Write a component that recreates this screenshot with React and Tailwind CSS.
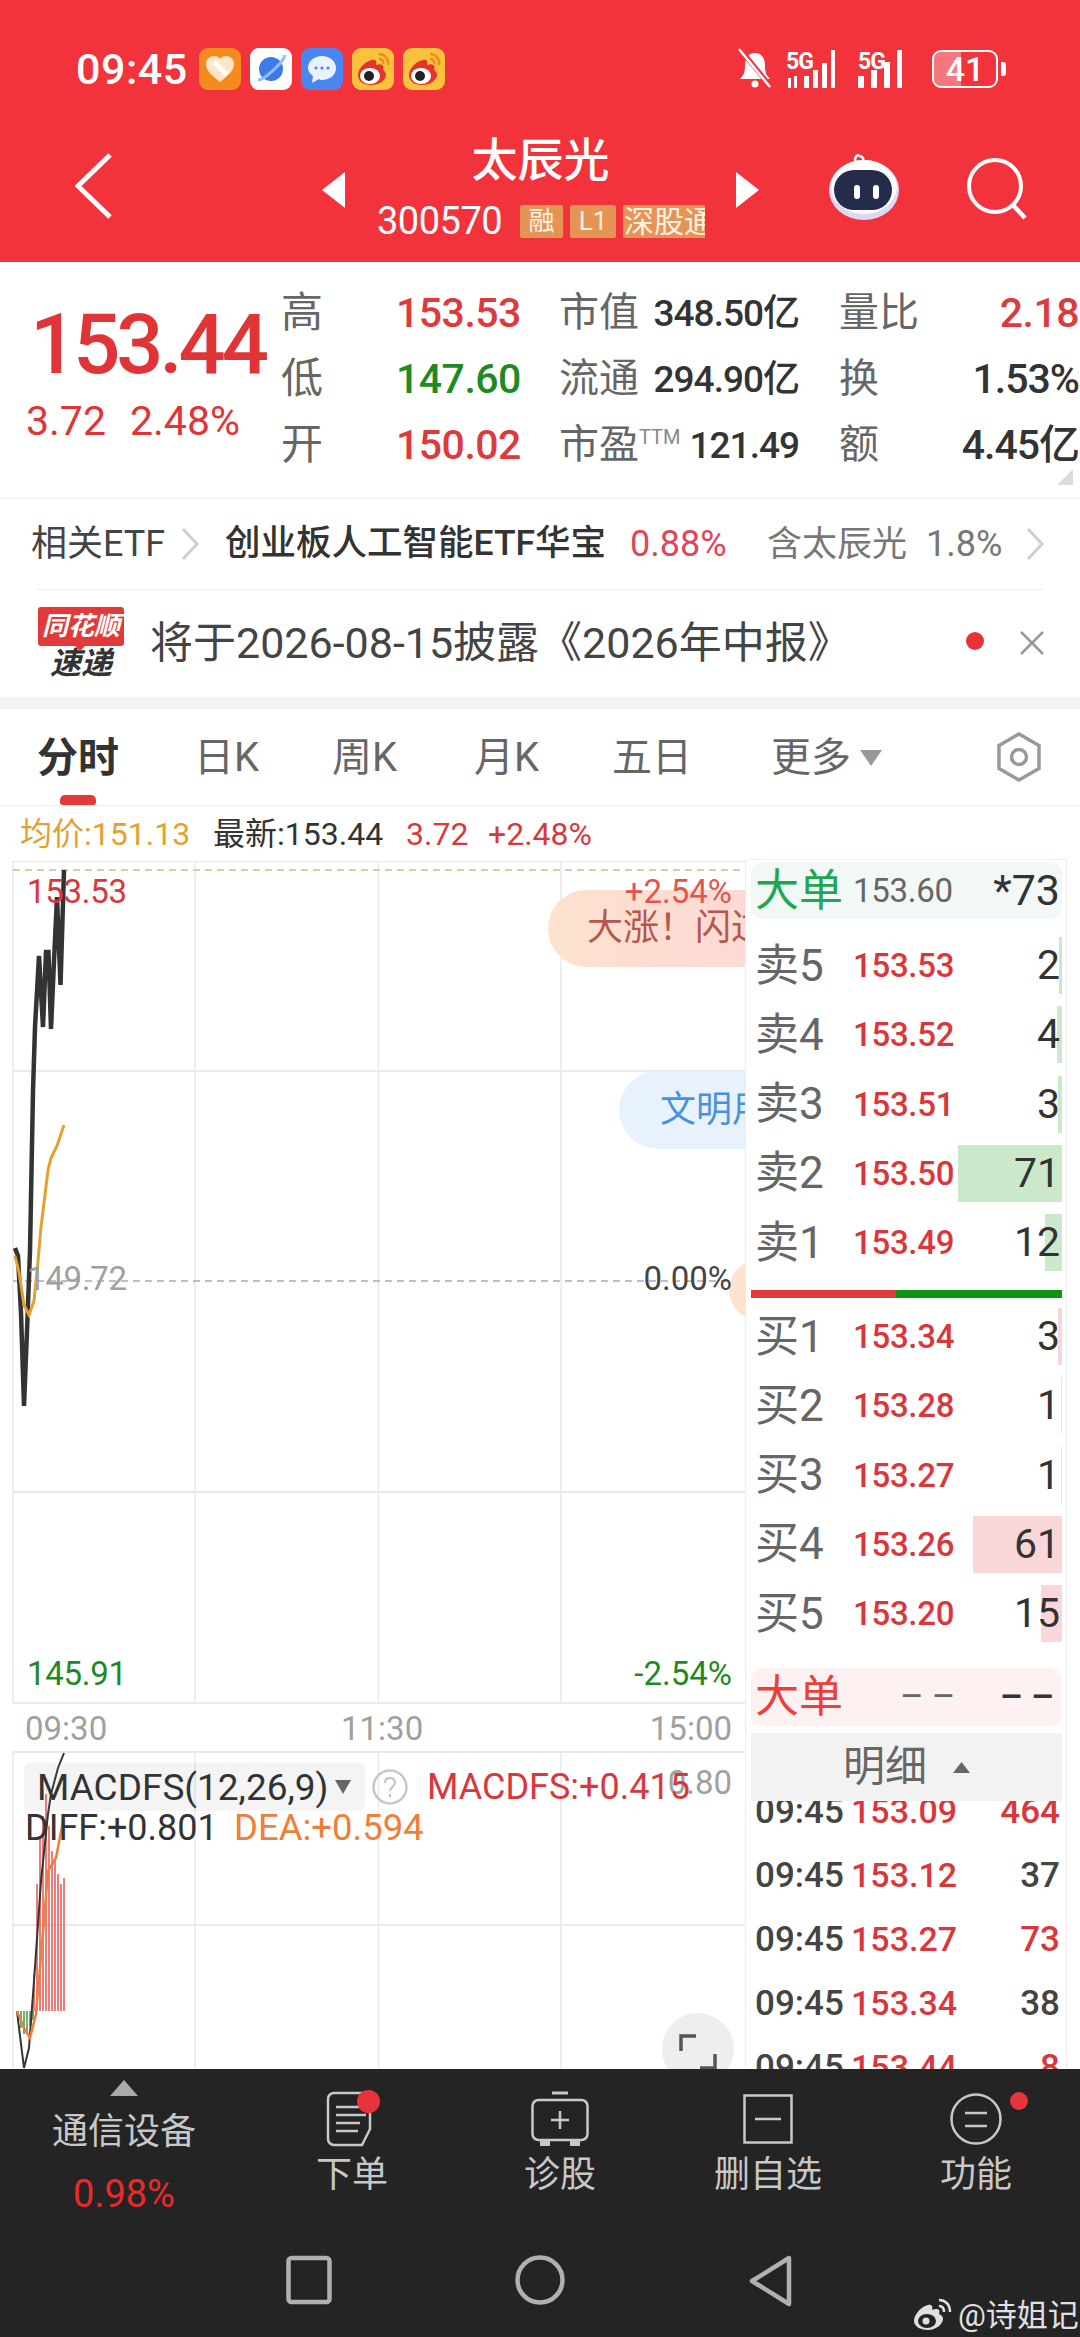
import React from 'react';

const asks = [
  { name: '卖5', price: '153.53', qty: '2', bar: 3 },
  { name: '卖4', price: '153.52', qty: '4', bar: 5 },
  { name: '卖3', price: '153.51', qty: '3', bar: 4 },
  { name: '卖2', price: '153.50', qty: '71', bar: 104 },
  { name: '卖1', price: '153.49', qty: '12', bar: 17 },
];

const bids = [
  { name: '买1', price: '153.34', qty: '3', bar: 4 },
  { name: '买2', price: '153.28', qty: '1', bar: 1, thin: true },
  { name: '买3', price: '153.27', qty: '1', bar: 1, thin: true },
  { name: '买4', price: '153.26', qty: '61', bar: 89 },
  { name: '买5', price: '153.20', qty: '15', bar: 21 },
];

const ticks = [
  { price: '153.09', qty: '464', up: true },
  { price: '153.12', qty: '37' },
  { price: '153.27', qty: '73', up: true },
  { price: '153.34', qty: '38' },
  { price: '153.44', qty: '8', up: true },
];

const macdBars = [
  [34, 1973], [37, 1883], [40, 1837], [43, 1815], [46, 1793], [49, 1825],
  [52, 1850], [55, 1857], [58, 1873], [61, 1883], [64, 1877],
];

const tools = [
  { label: '下单', icon: 'order', dot: 'on' },
  { label: '诊股', icon: 'diag' },
  { label: '删自选', icon: 'minus' },
  { label: '功能', icon: 'menu', dot: 'side' },
];

function Weibo({ size = 42 }) {
  return (
    <svg width={size} height={size} viewBox="0 0 42 42">
      <rect width="42" height="42" rx="9" fill="#f9c23c" />
      <path d="M6 27c0-7 8-14 14-15 4-1 5 2 4 5 5-2 9 0 7 5 2 1 3 3 3 5 0 5-7 10-15 10S6 33 6 27z" fill="#e6342a" />
      <ellipse cx="18" cy="28" rx="10" ry="8" fill="#fff" />
      <circle cx="17" cy="28" r="5" fill="#222" />
      <path d="M27 6c6 0 10 5 9 11M27 11c3 0 5 2 4 5" stroke="#f08a24" strokeWidth="2.4" fill="none" />
    </svg>
  );
}

function AppIcons() {
  return (
    <div className="flex gap-[9px] ml-[14px]">
      <svg width="42" height="42" viewBox="0 0 42 42">
        <rect width="42" height="42" rx="9" fill="#f58a1f" />
        <path d="M21 34C12 27 7 22 7 16c0-5 4-8 8-8 3 0 5 1 6 3 1-2 3-3 6-3 4 0 8 3 8 8 0 6-5 11-14 18z" fill="#fde6c8" />
        <path d="M15 14l13 13" stroke="#fff" strokeWidth="5" />
      </svg>
      <svg width="42" height="42" viewBox="0 0 42 42">
        <rect width="42" height="42" rx="9" fill="#fff" />
        <circle cx="21" cy="21" r="12" fill="#3c7be8" />
        <path d="M8 32C14 32 34 14 35 7" stroke="#8fc0f5" strokeWidth="3" fill="none" />
      </svg>
      <svg width="42" height="42" viewBox="0 0 42 42">
        <rect width="42" height="42" rx="9" fill="#4a86f0" />
        <path d="M21 8c8 0 14 5 14 12s-6 12-14 12c-1 0-2 0-3-1l-7 4 1-7c-3-2-5-5-5-8 0-7 6-12 14-12z" fill="#e9f2fe" />
        <circle cx="15" cy="20" r="1.6" fill="#4a86f0" />
        <circle cx="21" cy="20" r="1.6" fill="#4a86f0" />
        <circle cx="27" cy="20" r="1.6" fill="#4a86f0" />
      </svg>
      <Weibo />
      <Weibo />
    </div>
  );
}

function StatusRight() {
  return (
    <div className="flex items-center ml-auto mr-[74px] text-white">
      <svg width="36" height="42" viewBox="0 0 36 42" className="mr-[13px]">
        <path d="M18 5c-7 0-10 6-10 12 0 7-1 10-5 14h30c-4-4-5-7-5-14 0-6-3-12-10-12z" fill="#fff" />
        <circle cx="18" cy="36" r="3.500" fill="#fff" />
        <path d="M3 1l31 38" stroke="#f2333b" strokeWidth="5" />
        <path d="M2 1l31 38" stroke="#fff" strokeWidth="2.500" />
      </svg>
      <div className="relative w-[60px] h-[38px] mr-[12px]">
        <span className="absolute left-0 top-0 text-[23px] leading-none font-bold tracking-[-1px]">5G</span>
        <svg width="60" height="38" viewBox="0 0 60 38">
          <rect x="18" y="26" width="5" height="12" fill="#fff" />
          <rect x="27" y="20" width="5" height="18" fill="#fff" />
          <rect x="36" y="13" width="5" height="25" fill="#fff" />
          <rect x="45" y="0" width="4" height="38" fill="#fff" />
          <rect x="2" y="28" width="3" height="10" fill="#fff" />
          <rect x="8" y="26" width="3" height="12" fill="#fff" />
        </svg>
      </div>
      <div className="relative w-[56px] h-[38px] mr-[18px]">
        <span className="absolute left-0 top-0 text-[23px] leading-none font-bold tracking-[-1px]">5G</span>
        <svg width="56" height="38" viewBox="0 0 56 38">
          <rect x="0" y="26" width="6" height="12" fill="#fff" />
          <rect x="13" y="20" width="6" height="18" fill="#fff" />
          <rect x="26" y="12" width="6" height="26" fill="#fff" />
          <rect x="39" y="0" width="5" height="38" fill="#fff" />
        </svg>
      </div>
      <div className="relative w-[66px] h-[38px] border-[2px] border-white rounded-[9px] flex items-center justify-center overflow-hidden">
        <div className="absolute left-0 top-0 bottom-0 w-[27px] bg-[#ffffff55]" />
        <span className="relative text-[34px] leading-none font-medium">41</span>
      </div>
      <div className="w-[5px] h-[14px] bg-white rounded-r-[3px] ml-[3px]" />
    </div>
  );
}

function Robot() {
  return (
    <svg width="72" height="66" viewBox="0 0 72 66">
      <path d="M28 8c-2-3 0-7 3-7M31 2c3 0 5 2 4 5" stroke="#fff" strokeWidth="2.500" fill="none" />
      <ellipse cx="36" cy="36" rx="35" ry="30" fill="#dcd8f6" />
      <ellipse cx="36" cy="33" rx="33" ry="27" fill="#fff" />
      <rect x="6" y="16" width="58" height="40" rx="20" fill="#252b4a" />
      <rect x="26" y="31" width="6" height="14" rx="3" fill="#fff" />
      <rect x="45" y="31" width="6" height="14" rx="3" fill="#fff" />
    </svg>
  );
}

function Header() {
  return (
    <div className="h-[262px] shrink-0 bg-[#f2333b] text-white flex flex-col">
      <div className="h-[140px] flex items-start pt-[48px] pl-[76px]">
        <span className="w-[109px] text-[43px] leading-[42px] font-medium tracking-[0.5px]">09:45</span>
        <AppIcons />
        <StatusRight />
      </div>
      <div className="h-[122px] flex relative">
        <svg width="38" height="66" viewBox="0 0 38 66" className="ml-[75px] mt-[13px]">
          <path d="M35 2L3 33l32 31" stroke="#fff" strokeWidth="5" fill="none" />
        </svg>
        <svg width="24" height="36" viewBox="0 0 24 36" className="ml-[209px] mt-[32px]">
          <path d="M23 0v36L0 18z" fill="#fff" />
        </svg>
        <div className="w-[389px] h-full flex flex-col items-center">
          <span className="text-[46px] leading-[46px] mt-[-3px] font-medium">太辰光</span>
          <div className="flex items-center mt-[19px] self-start ml-[31px]">
            <span className="text-[38px] leading-[38px] tracking-[-0.5px] w-[143px]">300570</span>
            <span className="w-[43px] h-[33px] bg-[#e59455] text-[#fff3e4] text-[26px] leading-[33px] text-center rounded-[2px]">融</span>
            <span className="w-[46px] h-[33px] ml-[7px] bg-[#e59455] text-[#fff3e4] text-[26px] leading-[33px] text-center rounded-[2px]">L1</span>
            <span className="w-[82px] h-[33px] ml-[7px] bg-[#e59455] text-[#fff3e4] text-[30px] leading-[33px] pl-[1px] overflow-hidden whitespace-nowrap rounded-l-[2px]">深股通</span>
          </div>
        </div>
        <svg width="24" height="36" viewBox="0 0 24 36" className="mt-[32px]">
          <path d="M1 0v36l23-18z" fill="#fff" />
        </svg>
        <div className="ml-[69px] mt-[14px]">
          <Robot />
        </div>
        <svg width="62" height="62" viewBox="0 0 62 62" className="ml-[66px] mt-[18px]">
          <circle cx="29" cy="28" r="26" stroke="#fff" strokeWidth="4" fill="none" />
          <path d="M46 46l13 14" stroke="#fff" strokeWidth="4.500" />
        </svg>
      </div>
    </div>
  );
}

function StatCell({ label, value, valueClass }) {
  return (
    <div className="flex items-center justify-between">
      <span className="text-[40px] leading-none text-[#666]">{label}</span>
      <span className={valueClass}>{value}</span>
    </div>
  );
}

function Stats() {
  const dark = 'text-[37px] leading-none text-[#333] font-medium tracking-[-1px]';
  const big = 'text-[41px] leading-none text-[#333] font-medium tracking-[-1px]';
  const red = 'text-[41px] leading-none font-medium text-[#dc3a3c] tracking-[-0.5px]';
  return (
    <div className="h-[237px] shrink-0 bg-white border-b border-[#eeeeee] flex relative">
      <div className="w-[281px] shrink-0 pl-[26px]">
        <div className="text-[83px] leading-none font-medium text-[#e03436] tracking-[-4px] pl-[4px] mt-[41px]">153.44</div>
        <div className="flex mt-[15px] text-[41px] leading-none text-[#e03436]">
          <span className="w-[104px]">3.72</span>
          <span>2.48%</span>
        </div>
      </div>
      <div className="grid grid-cols-[115px_123px_40px_240px_40px_240px] grid-rows-[66px_66px_66px] pt-[18px] items-center">
        <span className="text-[42px] leading-none text-[#666]">高</span>
        <span className={red}>153.53</span>
        <span />
        <StatCell label="市值" value="348.50亿" valueClass={dark} />
        <span />
        <StatCell label="量比" value="2.18" valueClass={red} />
        <span className="text-[42px] leading-none text-[#666]">低</span>
        <span className="text-[41px] leading-none font-medium text-[#1d8a24] tracking-[-0.5px]">147.60</span>
        <span />
        <StatCell label="流通" value="294.90亿" valueClass={dark} />
        <span />
        <StatCell label="换" value="1.53%" valueClass={big} />
        <span className="text-[42px] leading-none text-[#666]">开</span>
        <span className={red}>150.02</span>
        <span />
        <div className="flex items-center justify-between">
          <span className="text-[40px] leading-none text-[#666]">
            市盈<span className="text-[20px] align-super text-[#888]">TTM</span>
          </span>
          <span className={dark}>121.49</span>
        </div>
        <span />
        <StatCell label="额" value="4.45亿" valueClass={big} />
      </div>
      <svg width="16" height="16" viewBox="0 0 16 16" className="absolute right-[7px] bottom-[13px]">
        <path d="M16 0v16H0z" fill="#dcdcdc" />
      </svg>
    </div>
  );
}

function Chevron({ className }) {
  return (
    <svg width="20" height="34" viewBox="0 0 20 34" className={className}>
      <path d="M3 2l14 15L3 32" stroke="#cfcfcf" strokeWidth="3" fill="none" />
    </svg>
  );
}

function EtfRow() {
  return (
    <div className="h-[90px] shrink-0 bg-white flex items-center pl-[31px] text-[36px] leading-none whitespace-nowrap">
      <span className="text-[#444] w-[149px]">相关ETF</span>
      <Chevron />
      <span className="ml-[25px] w-[405px] text-[#333] font-medium text-[35.500px]">创业板人工智能ETF华宝</span>
      <span className="w-[137px] text-[#e0455c]">0.88%</span>
      <span className="w-[159px] text-[#777] text-[35px]">含太辰光</span>
      <span className="w-[99px] text-[#777]">1.8%</span>
      <Chevron />
    </div>
  );
}

function NewsRow() {
  return (
    <div className="h-[108px] shrink-0 bg-white flex items-center relative">
      <div className="absolute left-[36px] right-[36px] top-0 h-px bg-[#eeeeee]" />
      <div className="ml-[37px] w-[88px] h-[72px] flex flex-col items-center shrink-0">
        <div className="relative w-[86px] h-[39px] bg-[#e23a3a] rounded-[3px] text-white text-[26px] leading-[39px] italic font-bold text-center whitespace-nowrap">
          同花顺
          <div className="absolute left-[36px] top-[38px] w-0 h-0 border-l-[6px] border-r-[6px] border-t-[6px] border-l-transparent border-r-transparent border-t-[#e23a3a]" />
        </div>
        <div className="text-[31px] leading-[30px] mt-[3px] italic font-bold text-[#333] whitespace-nowrap">速递</div>
      </div>
      <span className="ml-[25px] text-[43px] leading-none text-[#444] whitespace-nowrap">将于2026-08-15披露《2026年中报》</span>
      <div className="absolute left-[966px] top-[43px] w-[18px] h-[18px] rounded-full bg-[#e6343a]" />
      <svg width="24" height="24" viewBox="0 0 24 24" className="absolute left-[1020px] top-[42px]">
        <path d="M1 1l22 22M23 1L1 23" stroke="#999" strokeWidth="2.500" />
      </svg>
    </div>
  );
}

function Tabs() {
  return (
    <div className="h-[97px] shrink-0 bg-white border-b border-[#eeeeee] relative flex items-center text-[40px] leading-none text-[#666] pt-[2px] whitespace-nowrap">
      <span className="ml-[37px] w-[157px] font-bold text-[#333] text-[41px]">分时</span>
      <span className="w-[138px]">日K</span>
      <span className="w-[142px]">周K</span>
      <span className="w-[138px]">月K</span>
      <span className="w-[159px]">五日</span>
      <span>更多</span>
      <svg width="22" height="16" viewBox="0 0 22 16" className="ml-[9px]">
        <path d="M0 0h22L11 16z" fill="#999" />
      </svg>
      <svg width="50" height="52" viewBox="0 0 50 52" className="absolute left-[994px] top-[22px]">
        <path d="M25 3l20 11.500v23L25 49 5 37.500v-23z" stroke="#999" strokeWidth="3.500" fill="none" />
        <circle cx="25" cy="26" r="7.500" stroke="#999" strokeWidth="3.500" fill="none" />
      </svg>
      <div className="absolute left-[60px] bottom-0 w-[36px] h-[10px] bg-[#e23a3a] rounded-t-[5px] rounded-b-[3px]" />
    </div>
  );
}

function ChartDrawing() {
  const gridColor = '#e9e9e9';
  return (
    <svg width="745" height="1208" viewBox="0 860 745 1208" className="absolute left-0 top-0">
      {[195, 378.5, 561].map((x) => (
        <g key={x}>
          <line x1={x} y1="860" x2={x} y2="1702" stroke={gridColor} strokeWidth="1.500" />
          <line x1={x} y1="1751" x2={x} y2="2068" stroke={gridColor} strokeWidth="1.500" />
        </g>
      ))}
      {[860, 1070, 1491, 1702, 1751, 1924].map((y) => (
        <line key={y} x1="13" y1={y} x2="745" y2={y} stroke={gridColor} strokeWidth="2" />
      ))}
      <line x1="13" y1="860" x2="13" y2="1702" stroke={gridColor} strokeWidth="1.500" />
      <line x1="13" y1="1751" x2="13" y2="2068" stroke={gridColor} strokeWidth="1.500" />
      <line x1="13" y1="869" x2="745" y2="869" stroke="#d8b98c" strokeWidth="1.500" strokeDasharray="7 5" />
      <line x1="13" y1="1280" x2="745" y2="1280" stroke="#aaaaaa" strokeWidth="1.500" strokeDasharray="7 5" />
      <polyline
        points="15,1247 18,1255 21,1312 24,1405 27,1330 30,1250 33,1090 35,1026 39,955 43,1026 46,951 48.500,951 51,1028 54,960 57,896 60.500,984 64,869"
        stroke="#333"
        strokeWidth="4.500"
        fill="none"
      />
      <polyline
        points="15,1255 19,1271 24,1304 29,1314 34,1300 38,1260 41,1226 48,1169 51,1157 57,1145 64,1124"
        stroke="#e5a02e"
        strokeWidth="3"
        fill="none"
      />
      {macdBars.map(([x, top]) => (
        <line key={x} x1={x} y1={top} x2={x} y2="2010" stroke="#e8504c" strokeWidth="1.500" />
      ))}
      {[18, 21, 24, 27, 30, 33].map((x) => (
        <line key={x} x1={x} y1="2010" x2={x} y2={2035 - Math.abs(x - 25) * 2} stroke="#3c9c3c" strokeWidth="1.500" />
      ))}
      <polyline points="17,2010 20,2035 24,2067 29,2047 34,1980 41,1880 48,1813 51,1793 58,1767 64,1752" stroke="#333" strokeWidth="2" fill="none" />
      <polyline points="17,2010 24,2027 30,2037 36,2013 44,1920 48,1870 56,1857 63,1820" stroke="#ef7f38" strokeWidth="2.500" fill="none" />
    </svg>
  );
}

function Chart() {
  return (
    <div className="relative flex-1 overflow-hidden">
      <ChartDrawing />
      <div className="absolute left-[548px] top-[29px] w-[240px] h-[77px] rounded-l-[38px] bg-gradient-to-r from-[#fde2cf] to-[#fdd8d6] pl-[39px] text-[36px] leading-[77px] text-[#b6574c] whitespace-nowrap">
        大涨！闪过
      </div>
      <div className="absolute left-[619px] top-[210px] w-[200px] h-[78px] rounded-l-[39px] bg-[#e8f2fc] pl-[41px] text-[36px] leading-[78px] text-[#4a90e2] whitespace-nowrap">
        文明用语
      </div>
      <div className="absolute left-[729px] top-[399px] w-[60px] h-[60px] rounded-full bg-[#fde2cf]" />
      <span className="absolute left-[27px] top-[14px] text-[33px] leading-none text-[#d9373c] tracking-[-0.3px]">153.53</span>
      <span className="absolute right-[13px] top-[14px] text-[33px] leading-none text-[#e2554f]">+2.54%</span>
      <span className="absolute left-[27px] top-[401px] text-[33px] leading-none text-[#a0a0a0] tracking-[-0.3px]">149.72</span>
      <span className="absolute right-[13px] top-[401px] text-[33px] leading-none text-[#444]">0.00%</span>
      <span className="absolute left-[27px] top-[796px] text-[33px] leading-none text-[#1d8a24] tracking-[-0.3px]">145.91</span>
      <span className="absolute right-[13px] top-[796px] text-[33px] leading-none text-[#1d8a24]">-2.54%</span>
      <span className="absolute left-[25px] top-[851px] text-[33px] leading-none text-[#a0a0a0]">09:30</span>
      <span className="absolute left-[341px] top-[851px] text-[33px] leading-none text-[#a0a0a0]">11:30</span>
      <span className="absolute right-[13px] top-[851px] text-[33px] leading-none text-[#a0a0a0]">15:00</span>
      <div className="absolute left-[24px] top-[902px] w-[341px] h-[48px] rounded-[6px] bg-[#88888818] flex items-center pl-[13px] text-[37px] leading-none text-[#333] whitespace-nowrap">
        <span className="w-[298px]">MACDFS(12,26,9)</span>
        <svg width="16" height="14" viewBox="0 0 16 14">
          <path d="M0 0h16L8 14z" fill="#666" />
        </svg>
      </div>
      <svg width="36" height="36" viewBox="0 0 36 36" className="absolute left-[372px] top-[908px]">
        <circle cx="18" cy="18" r="16.500" stroke="#c8c8c8" strokeWidth="2.500" fill="none" />
        <path d="M13 14c0-3 2-5 5-5s5 2 5 5-5 4-5 8M18 25v3" stroke="#c0c0c0" strokeWidth="2" fill="none" />
      </svg>
      <span className="absolute right-[13px] top-[905px] text-[33px] leading-none text-[#a0a0a0]">0.80</span>
      <span className="absolute left-[427px] top-[908px] text-[36px] leading-none text-[#d9373c] whitespace-nowrap">MACDFS:+0.415</span>
      <span className="absolute left-[25px] top-[949px] text-[36px] leading-none text-[#333] whitespace-nowrap">DIFF:+0.801</span>
      <span className="absolute left-[234px] top-[949px] text-[36.500px] leading-none text-[#ef7f38] whitespace-nowrap">DEA:+0.594</span>
      <div className="absolute left-[662px] top-[1152px] w-[72px] h-[72px] rounded-full bg-[#eeeeee]" />
      <svg width="38" height="36" viewBox="0 0 38 36" className="absolute left-[679px] top-[1173px]">
        <path d="M17 2H2v15M21 34h15V20" stroke="#555" strokeWidth="3.500" fill="none" />
      </svg>
    </div>
  );
}

function BookRow({ row, barColor }) {
  return (
    <div className="relative h-[57px] flex items-center">
      <div
        className="absolute right-0 top-0 bottom-0"
        style={{ width: row.bar, background: row.thin ? '#e5e5e5' : barColor }}
      />
      <span className="relative w-[102px] pl-[4px] text-[44px] leading-none text-[#666] whitespace-nowrap">{row.name}</span>
      <span className="relative text-[33px] leading-none font-medium text-[#d9373c] tracking-[-0.3px]">{row.price}</span>
      <span className="relative ml-auto pr-[2px] text-[41px] leading-none text-[#333]">{row.qty}</span>
    </div>
  );
}

function OrderBook() {
  return (
    <div className="w-[322px] shrink-0 mt-[53px] border-x border-t border-[#eeeeee] bg-white flex flex-col">
      <div className="pl-[5px] pr-[4px] pt-[2px] flex flex-col">
        <div className="h-[57px] rounded-[12px] bg-[#f2f8f5] flex items-center">
          <span className="w-[102px] pl-[4px] text-[44px] leading-none text-[#1fa653]">大单</span>
          <span className="text-[33px] leading-none text-[#666] tracking-[-0.3px]">153.60</span>
          <span className="ml-auto pr-[2px] text-[43px] leading-none text-[#333]">*73</span>
        </div>
        <div className="flex flex-col gap-[12.250px] mt-[18px]">
          {asks.map((row) => (
            <BookRow key={row.name} row={row} barColor="#cbe9ca" />
          ))}
        </div>
        <div className="flex h-[8px] mt-[19px] mb-[10px]">
          <div className="w-[145px] bg-[#e23a3a]" />
          <div className="flex-1 bg-[#0a9410]" />
        </div>
        <div className="flex flex-col gap-[12.250px]">
          {bids.map((row) => (
            <BookRow key={row.name} row={row} barColor="#f9d6d8" />
          ))}
        </div>
        <div className="h-[58px] mt-[26px] rounded-[12px] bg-[#fdf1f2] flex items-center">
          <span className="w-[149px] pl-[4px] text-[44px] leading-none text-[#e8403a]">大单</span>
          <span className="text-[36px] leading-none text-[#666] tracking-[8px]">––</span>
          <span className="ml-auto text-[36px] leading-none text-[#333] tracking-[8px] font-medium">––</span>
        </div>
        <div className="relative z-10 h-[68px] mt-[7px] bg-[#f2f2f2] flex items-center justify-center gap-[26px]">
          <span className="text-[42px] leading-none text-[#666]">明细</span>
          <svg width="17" height="11" viewBox="0 0 17 11">
            <path d="M8.500 0L17 11H0z" fill="#666" />
          </svg>
        </div>
        <div className="h-[269px] overflow-hidden">
          <div className="mt-[-22px] flex flex-col">
            {ticks.map((t) => (
              <div key={t.qty} className="h-[64px] flex items-center font-medium">
                <span className="w-[100px] pl-[4px] text-[35px] leading-none text-[#444]">09:45</span>
                <span className="text-[34px] leading-none text-[#d9373c]">{t.price}</span>
                <span className={t.up ? 'ml-auto pr-[2px] text-[35px] leading-none text-[#d9373c]' : 'ml-auto pr-[2px] text-[35px] leading-none text-[#444]'}>
                  {t.qty}
                </span>
              </div>
            ))}
          </div>
        </div>
      </div>
    </div>
  );
}

function ToolIcon({ icon }) {
  if (icon === 'order') {
    return (
      <svg width="52" height="56" viewBox="0 0 52 56">
        <path d="M8 2h36v36L36 54H8a6 6 0 0 1-6-6V8a6 6 0 0 1 6-6z" stroke="#c8c8c8" strokeWidth="2.500" fill="none" />
        <path d="M10 16h30M10 24h30M10 32h24M10 40h22" stroke="#c8c8c8" strokeWidth="2.500" />
      </svg>
    );
  }
  if (icon === 'diag') {
    return (
      <svg width="58" height="56" viewBox="0 0 58 56">
        <path d="M21 2h16" stroke="#c8c8c8" strokeWidth="3" />
        <rect x="1.500" y="9" width="55" height="40" rx="6" stroke="#c8c8c8" strokeWidth="2.500" fill="none" />
        <path d="M29 20v18M20 29h18" stroke="#c8c8c8" strokeWidth="2.500" />
        <path d="M9 49h10v6H9zM39 49h10v6H39z" fill="#c8c8c8" />
      </svg>
    );
  }
  if (icon === 'minus') {
    return (
      <svg width="50" height="50" viewBox="0 0 50 50">
        <rect x="1.500" y="1.500" width="47" height="47" stroke="#c8c8c8" strokeWidth="2.500" fill="none" />
        <path d="M12 25h26" stroke="#c8c8c8" strokeWidth="2.500" />
      </svg>
    );
  }
  return (
    <svg width="52" height="52" viewBox="0 0 52 52">
      <circle cx="26" cy="26" r="24.500" stroke="#c8c8c8" strokeWidth="2.500" fill="none" />
      <path d="M15 20h22M15 33h22" stroke="#c8c8c8" strokeWidth="2.500" />
    </svg>
  );
}

function BottomBar() {
  return (
    <div className="h-[269px] shrink-0 bg-[#242424] relative flex flex-col">
      <div className="h-[170px] flex text-[#c8c8c8]">
        <div className="w-[248px] flex flex-col items-center pt-[11px]">
          <svg width="28" height="16" viewBox="0 0 28 16">
            <path d="M14 0l14 16H0z" fill="#aaa" />
          </svg>
          <span className="text-[36px] leading-none mt-[18px]">通信设备</span>
          <span className="text-[38px] leading-none mt-[25px] text-[#ea2a2a]">0.98%</span>
        </div>
        <div className="flex-1 flex">
          {tools.map((tool) => (
            <div key={tool.label} className="w-[208px] flex flex-col items-center pt-[22px] relative">
              <div className="h-[56px] flex items-center justify-center relative">
                <ToolIcon icon={tool.icon} />
                {tool.dot === 'on' && <div className="absolute right-[-2px] top-[-1px] w-[23px] h-[23px] rounded-full bg-[#e6343a]" />}
                {tool.dot === 'side' && <div className="absolute right-[-26px] top-[1px] w-[18px] h-[18px] rounded-full bg-[#e6343a]" />}
              </div>
              <span className="text-[36px] leading-none mt-[10px] whitespace-nowrap">{tool.label}</span>
            </div>
          ))}
        </div>
      </div>
      <div className="flex-1 flex items-start pt-[16px]">
        <svg width="46" height="50" viewBox="0 0 46 50" className="ml-[286px]">
          <rect x="2.500" y="3" width="41" height="44" rx="3" stroke="#b0b0b0" strokeWidth="4.500" fill="none" />
        </svg>
        <svg width="50" height="50" viewBox="0 0 50 50" className="ml-[183px]">
          <circle cx="25" cy="25" r="22.500" stroke="#b0b0b0" strokeWidth="4.500" fill="none" />
        </svg>
        <svg width="46" height="52" viewBox="0 0 46 52" className="ml-[183px]">
          <path d="M41 3v46L4 26z" stroke="#b0b0b0" strokeWidth="4.500" strokeLinejoin="round" fill="none" />
        </svg>
      </div>
      <div className="absolute left-[913px] top-[229px] flex items-center text-[#e0e0e0]">
        <svg width="40" height="34" viewBox="0 0 40 34">
          <path d="M1 23c0-7 8-15 14-16 4-1 5 2 4 5 5-2 9-1 7 4 3 1 4 3 4 5 0 5-7 11-15 11S1 28 1 23z" fill="#e0e0e0" />
          <ellipse cx="14" cy="23" rx="9" ry="7" fill="#242424" />
          <circle cx="13" cy="23" r="3.500" fill="#e0e0e0" />
          <path d="M26 2c6 0 11 4 11 12M26 8c3 0 5 2 5 6" stroke="#e0e0e0" strokeWidth="2.500" fill="none" />
        </svg>
        <span className="ml-[5px] text-[31px] leading-none whitespace-nowrap">@诗姐记</span>
      </div>
    </div>
  );
}

export default function App() {
  return (
    <div className="w-[1080px] h-[2337px] overflow-hidden flex flex-col bg-white [font-family:Roboto,'Noto_Sans_CJK_SC',sans-serif]">
      <Header />
      <Stats />
      <EtfRow />
      <NewsRow />
      <div className="h-[12px] shrink-0 bg-[#f3f3f3]" />
      <Tabs />
      <div className="flex h-[1263px] shrink-0 bg-white">
        <div className="w-[745px] shrink-0 flex flex-col">
          <div className="h-[55px] shrink-0 flex items-center pl-[20px] pt-[1px] text-[32px] leading-none whitespace-nowrap">
            <span className="w-[193px] text-[#e3a230]">均价:151.13</span>
            <span className="w-[193px] text-[#333]">最新:153.44</span>
            <span className="w-[82px] text-[#d9373c]">3.72</span>
            <span className="text-[#d9373c]">+2.48%</span>
          </div>
          <Chart />
        </div>
        <OrderBook />
      </div>
      <BottomBar />
    </div>
  );
}
